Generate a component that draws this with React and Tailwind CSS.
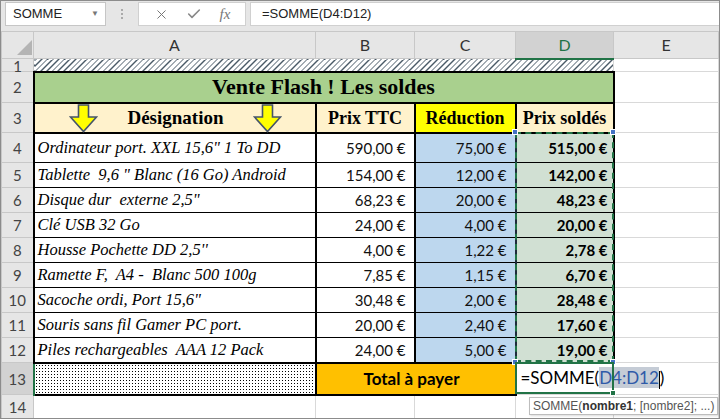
import { X, Check } from "lucide-react"

const rows = [
  ["Ordinateur port. XXL 15,6\" 1 To DD", "590,00 €", "75,00 €", "515,00 €"],
  ["Tablette  9,6 \" Blanc (16 Go) Android", "154,00 €", "12,00 €", "142,00 €"],
  ["Disque dur  externe 2,5\"", "68,23 €", "20,00 €", "48,23 €"],
  ["Clé USB 32 Go", "24,00 €", "4,00 €", "20,00 €"],
  ["Housse Pochette DD 2,5''", "4,00 €", "1,22 €", "2,78 €"],
  ["Ramette F,  A4 -  Blanc 500 100g", "7,85 €", "1,15 €", "6,70 €"],
  ["Sacoche ordi, Port 15,6\"", "30,48 €", "2,00 €", "28,48 €"],
  ["Souris sans fil Gamer PC port.", "20,00 €", "2,40 €", "17,60 €"],
  ["Piles rechargeables  AAA 12 Pack", "24,00 €", "5,00 €", "19,00 €"],
]

const rowHead = "bg-[#e6e6e6] text-center text-[#444] text-[15px] border border-[#c8c8c8] font-['Lato',sans-serif] p-0"
const grid = "border border-[#d9d9d9] p-0"
const serif = "font-['Liberation_Serif','DejaVu_Serif',serif]"
const num = "font-['Lato',sans-serif] text-[15px] text-right"

const Arrow = ({ className }) => (
  <svg className={className} width="29" height="29" viewBox="0 0 29 29">
    <polygon points="9.5,1 19.5,1 19.5,13 27.5,13 14.5,27.5 1.5,13 9.5,13" fill="#ffff00" stroke="#44546a" strokeWidth="1.6" strokeLinejoin="miter" />
  </svg>
)

const Handle = ({ className }) => <div className={`absolute w-[6px] h-[6px] bg-[#4472c4] border border-white ${className}`} />

export default function App() {
  return (
    <div className="w-[720px] h-[419px] overflow-hidden border border-[#8c8c8c] bg-white flex flex-col">
      {/* barre de formule */}
      <div className="h-[30px] shrink-0 bg-[#e6e6e6] flex items-start pt-[1px] font-['Liberation_Sans',sans-serif] text-[13px] text-[#222]">
        <div className="ml-[4px] w-[101px] h-[24px] bg-white border border-[#c6c6c6] flex items-center justify-between pl-[7px] pr-[6px]">
          <span>SOMME</span>
          <span className="text-[#777] text-[8px]">▼</span>
        </div>
        <div className="w-[32px] h-[24px] flex flex-col items-center justify-center gap-[2px]">
          <span className="w-[2px] h-[2px] bg-[#aaa]" />
          <span className="w-[2px] h-[2px] bg-[#aaa]" />
          <span className="w-[2px] h-[2px] bg-[#aaa]" />
        </div>
        <div className="w-[108px] h-[24px] bg-white border border-[#d0d0d0] flex items-center justify-around px-[6px] text-[#777]">
          <X size={15} strokeWidth={1.6} />
          <Check size={16} strokeWidth={2.4} className="text-[#888]" />
          <span className={`${serif} italic text-[15px]`}>fx</span>
        </div>
        <div className="ml-[4px] flex-1 h-[24px] bg-white border border-[#d0d0d0] border-r-0 flex items-center pl-[11px]">
          =SOMME(D4:D12)
        </div>
      </div>

      <div className="relative flex-1">
        <table className="border-collapse table-fixed w-[718px] leading-[18px]">
          <colgroup>
            <col className="w-[32px]" />
            <col className="w-[282px]" />
            <col className="w-[99px]" />
            <col className="w-[101px]" />
            <col className="w-[98px]" />
            <col />
          </colgroup>
          <tbody>
            <tr className="h-[27px]">
              <td className="bg-[#e6e6e6] border border-[#c8c8c8] p-0 align-bottom">
                <svg className="block" width="32" height="26" viewBox="0 0 32 26">
                  <polygon points="30,8 30,23 15,23" fill="#b4b4b4" />
                </svg>
              </td>
              {["A", "B", "C"].map((l) => (
                <td key={l} className="bg-[#e6e6e6] border border-[#c8c8c8] text-center text-[16px] text-[#333] font-['Lato',sans-serif] p-0">{l}</td>
              ))}
              <td className="bg-[#d2d2d2] border border-[#c8c8c8] border-b-2 border-b-[#217346] text-center text-[16px] text-[#217346] font-['Lato',sans-serif] p-0">D</td>
              <td className="bg-[#e6e6e6] border border-[#c8c8c8] text-center text-[16px] text-[#333] font-['Lato',sans-serif] p-0">E</td>
            </tr>

            <tr className="h-[13px]">
              <td className={`${rowHead} text-[11px] leading-[10px] align-bottom`}>1</td>
              <td colSpan={4} className="p-0 border border-[#d9d9d9] border-b-2 border-b-black bg-[repeating-linear-gradient(135deg,#4a5a66_0px,#4a5a66_1px,#ffffff_1px,#ffffff_4px)]" />
              <td className={grid} />
            </tr>

            <tr className="h-[31px]">
              <td className={rowHead}>2</td>
              <td colSpan={4} className={`border-2 border-black bg-[#a9d08e] text-center font-bold text-[22px] text-black p-0 ${serif}`}>
                Vente Flash ! Les soldes
              </td>
              <td className={grid} />
            </tr>

            <tr className="h-[30px]">
              <td className={rowHead}>3</td>
              <td className={`border-2 border-black bg-[#fff2cc] p-0 ${serif}`}>
                <div className="relative flex justify-center items-center h-[27px] font-bold text-[19px] pl-[2px]">
                  Désignation
                  <Arrow className="absolute left-[34px] top-0" />
                  <Arrow className="absolute left-[218px] top-0" />
                </div>
              </td>
              <td className={`border-2 border-black bg-[#fff2cc] text-center font-bold text-[18px] p-0 ${serif}`}>Prix TTC</td>
              <td className={`border-2 border-black bg-[#ffff00] text-center font-bold text-[18px] p-0 ${serif}`}>Réduction</td>
              <td className={`border-2 border-black bg-[#fff2cc] text-center font-bold text-[18px] p-0 ${serif}`}>Prix soldés</td>
              <td className={grid} />
            </tr>

            {rows.map((r, i) => (
              <tr key={i} className={i === 0 ? "h-[30px]" : "h-[25px]"}>
                <td className={rowHead}>{i + 4}</td>
                <td className={`border border-black border-l-2 border-r-2 ${i === 8 ? "border-b-2" : ""} italic text-[16.5px] pl-[3px] whitespace-pre text-black ${serif}`}>{r[0]}</td>
                <td className={`border border-black border-r-2 ${i === 8 ? "border-b-2" : ""} bg-white ${num} pr-[8px] text-[#111]`}>{r[1]}</td>
                <td className={`border border-black border-r-2 border-r-[#1f2a3a] ${i === 8 ? "border-b-2" : ""} bg-[#bdd7ee] ${num} pr-[8px] text-[#111]`}>{r[2]}</td>
                <td className={`border border-black border-r-2 ${i === 8 ? "border-b-2" : ""} bg-[#d1e0d3] ${num} font-bold pr-[5px] text-black`}>{r[3]}</td>
                <td className={grid} />
              </tr>
            ))}

            <tr className="h-[32px]">
              <td className="bg-[#d2d2d2] text-center text-[#444] text-[15px] border border-[#c8c8c8] border-r-2 border-r-[#217346] font-['Lato',sans-serif] p-0">13</td>
              <td className="border-2 border-black p-0 bg-[radial-gradient(circle,#000_0.7px,transparent_0.9px)] bg-[length:3px_3px]" />
              <td colSpan={2} className="border-2 border-black bg-[#ffc000] text-center font-bold text-[17px] font-['Lato',sans-serif] p-0 pr-[8px]">
                Total à payer
              </td>
              <td className="border border-[#d9d9d9] p-0 pl-[4px] whitespace-nowrap overflow-visible font-['Lato',sans-serif] text-[17px] text-black">
                =SOMME(<span className="bg-[#c5ccd6] text-[#2e5aa8]">D4:D12</span><span className="inline-block w-[1px] h-[18px] bg-black align-middle" />)
              </td>
              <td className={grid} />
            </tr>

            <tr className="h-[25px]">
              <td className={rowHead}>14</td>
              <td className={grid} />
              <td className={grid} />
              <td className={grid} />
              <td className={grid} />
              <td className={grid} />
            </tr>
          </tbody>
        </table>

        {/* plage D4:D12 */}
        <div className="absolute left-[514px] top-[101px] w-[99px] h-[230px] border-2 border-dashed border-[#217346]" />
        <Handle className="left-[511px] top-[98px]" />
        <Handle className="left-[609px] top-[98px]" />
        <Handle className="left-[511px] top-[328px]" />
        <Handle className="left-[609px] top-[328px]" />

        {/* cellule active D13 */}
        <div className="absolute left-[514px] top-[331px] w-[99px] h-[32px] border-2 border-[#217346]" />
        <div className="absolute left-[609px] top-[359px] w-[6px] h-[6px] bg-[#217346] border border-white" />

        {/* info-bulle */}
        <div className="absolute left-[528px] top-[366px] h-[18px] px-[3px] bg-white border border-[#bdbdbd] flex items-center text-[12px] text-[#555] font-['Liberation_Sans',sans-serif] whitespace-nowrap shadow-[1px_1px_2px_rgba(0,0,0,0.15)]">
          SOMME(<b className="text-[#333]">nombre1</b>; [nombre2]; ...)
        </div>
      </div>
    </div>
  )
}
